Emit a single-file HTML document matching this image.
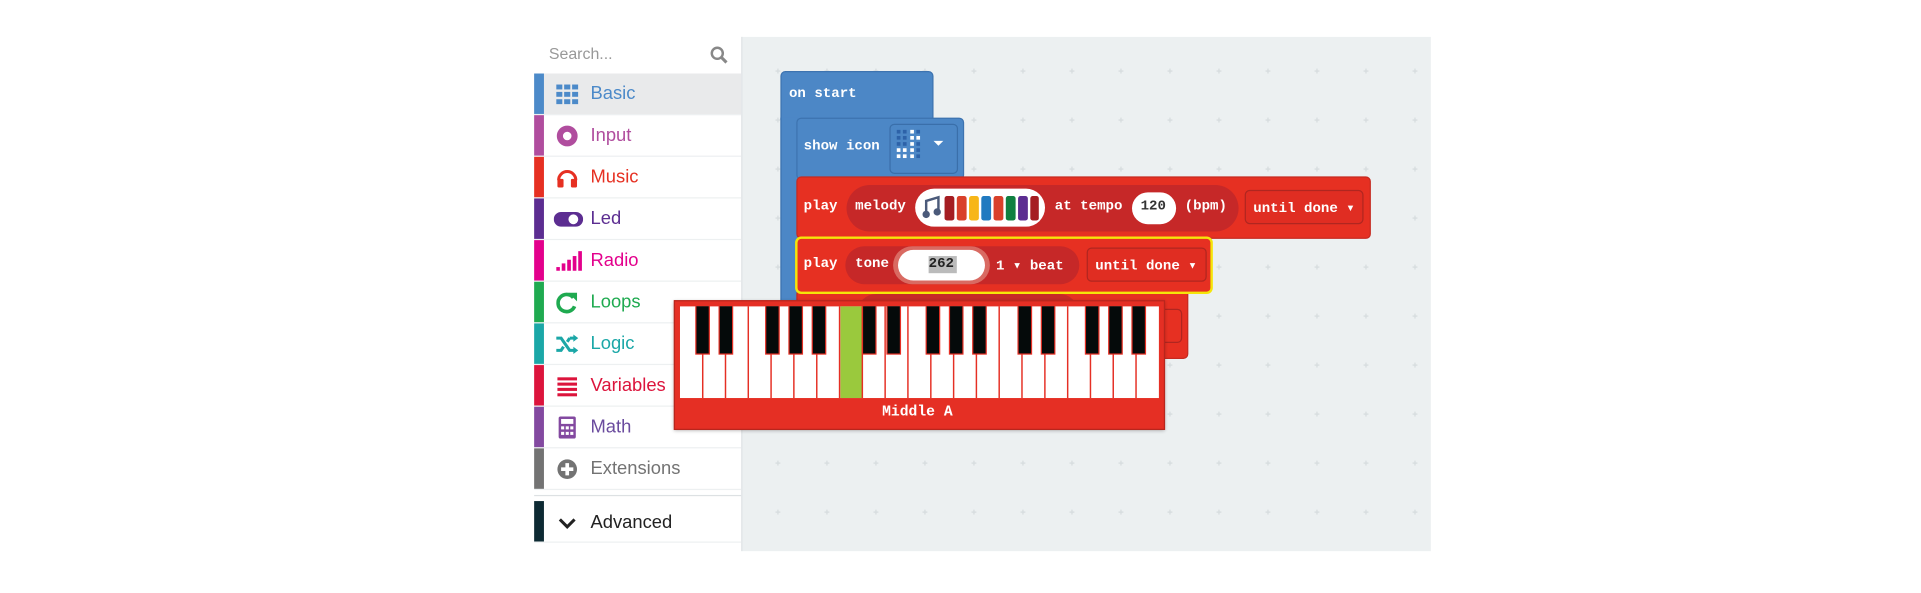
<!DOCTYPE html>
<html><head><meta charset="utf-8"><style>
*{margin:0;padding:0;box-sizing:border-box}
body{width:1921px;height:593px;background:#fff;position:relative;overflow:hidden;font-family:"Liberation Sans",sans-serif}
#w{position:absolute;left:0;top:0;width:1568px;height:484px;transform:scale(1.2251);transform-origin:0 0}
.a{position:absolute}
.row{position:absolute;left:436px;width:169px;height:34px;border-bottom:1px solid #edf0f1}
.row .bar{position:absolute;left:0;top:0;width:8px;height:100%}
.row .lb{position:absolute;left:46px;top:8px;font-size:15px}
.row .ic{position:absolute;left:18px;top:8px;width:18px;height:18px}
.m{font-family:"Liberation Mono",monospace;font-weight:bold;font-size:11.5px;color:#fff;position:absolute;white-space:nowrap}
</style></head><body><div id="w">
<svg class="a" style="left:605px;top:30px" width="563" height="420">
<defs><pattern id="p" width="40" height="40" patternUnits="userSpaceOnUse" x="10" y="8"><path d="M18 20h4M20 18v4" stroke="#d6dcde" stroke-width="1"/></pattern></defs>
<rect width="563" height="420" fill="#ecf0f1"/><rect width="563" height="420" fill="url(#p)"/>
<rect x="0" y="0" width="1" height="420" fill="#dde1e3"/>
</svg>
<div class="a" style="left:448px;top:36px;font-size:13px;color:#999">Search...</div>
<svg class="a" style="left:579px;top:37px" width="16" height="16"><circle cx="6.5" cy="6.5" r="4.5" fill="none" stroke="#888" stroke-width="2"/><path d="M10 10l4 4" stroke="#888" stroke-width="2.5"/></svg>

<div class="row" style="top:60px;background:#e9eaeb"><div class="bar" style="background:#4c8ac9"></div>
<svg class="ic" viewBox="0 0 18 18"><g fill="#4c8ac9"><rect x="0" y="1" width="5" height="4"/><rect x="6.5" y="1" width="5" height="4"/><rect x="13" y="1" width="5" height="4"/><rect x="0" y="7" width="5" height="4"/><rect x="6.5" y="7" width="5" height="4"/><rect x="13" y="7" width="5" height="4"/><rect x="0" y="13" width="5" height="4"/><rect x="6.5" y="13" width="5" height="4"/><rect x="13" y="13" width="5" height="4"/></g></svg>
<div class="lb" style="color:#4c8ac9">Basic</div></div>
<div class="row" style="top:94px"><div class="bar" style="background:#b04d9e"></div>
<svg class="ic" viewBox="0 0 18 18"><circle cx="9" cy="9" r="6" fill="none" stroke="#b04d9e" stroke-width="5"/></svg>
<div class="lb" style="color:#b04d9e">Input</div></div>
<div class="row" style="top:128px"><div class="bar" style="background:#e63022"></div>
<svg class="ic" viewBox="0 0 18 18"><path d="M2 11a7 7 0 0 1 14 0" fill="none" stroke="#e63022" stroke-width="2.5"/><rect x="1" y="10" width="5" height="7" rx="1" fill="#e63022"/><rect x="12" y="10" width="5" height="7" rx="1" fill="#e63022"/></svg>
<div class="lb" style="color:#e63022">Music</div></div>
<div class="row" style="top:162px"><div class="bar" style="background:#5c2d91"></div>
<svg class="ic" viewBox="0 0 24 18" style="width:24px;left:16px"><rect x="0" y="3" width="24" height="12" rx="6" fill="#5c2d91"/><circle cx="16" cy="9" r="4" fill="#fff"/></svg>
<div class="lb" style="color:#5c2d91">Led</div></div>
<div class="row" style="top:196px"><div class="bar" style="background:#e3008c"></div>
<svg class="ic" viewBox="0 0 22 18" style="width:22px"><g fill="#e3008c"><rect x="0" y="14" width="3" height="3"/><rect x="4.5" y="11" width="3" height="6"/><rect x="9" y="8" width="3" height="9"/><rect x="13.5" y="5" width="3" height="12"/><rect x="18" y="1" width="3" height="16"/></g></svg>
<div class="lb" style="color:#e3008c">Radio</div></div>
<div class="row" style="top:230px"><div class="bar" style="background:#1faa50"></div>
<svg class="ic" viewBox="0 0 18 18"><path d="M14 5A7 7 0 1 0 15 12" fill="none" stroke="#1faa50" stroke-width="3"/><path d="M10 1h7v7z" fill="#1faa50"/></svg>
<div class="lb" style="color:#1faa50">Loops</div></div>
<div class="row" style="top:264px"><div class="bar" style="background:#1ba7a7"></div>
<svg class="ic" viewBox="0 0 18 18"><path d="M0 4h4l7 10h4M0 14h4l2-3M11 4h4M9 7l2-3" fill="none" stroke="#1ba7a7" stroke-width="2.5"/><path d="M14 1l4 3-4 3zM14 11l4 3-4 3z" fill="#1ba7a7"/></svg>
<div class="lb" style="color:#1ba7a7">Logic</div></div>
<div class="row" style="top:298px"><div class="bar" style="background:#dc143c"></div>
<svg class="ic" viewBox="0 0 18 18"><g fill="#dc143c"><rect x="1" y="2" width="16" height="2.5"/><rect x="1" y="6.3" width="16" height="2.5"/><rect x="1" y="10.6" width="16" height="2.5"/><rect x="1" y="15" width="16" height="2.5"/></g></svg>
<div class="lb" style="color:#dc143c">Variables</div></div>
<div class="row" style="top:332px"><div class="bar" style="background:#8349a0"></div>
<svg class="ic" viewBox="0 0 18 18"><rect x="2" y="0" width="14" height="18" rx="1.5" fill="#8349a0"/><rect x="4" y="2" width="10" height="4" fill="#fff"/><g fill="#fff"><rect x="4" y="8" width="2.5" height="2.5"/><rect x="7.8" y="8" width="2.5" height="2.5"/><rect x="11.5" y="8" width="2.5" height="2.5"/><rect x="4" y="12.5" width="2.5" height="2.5"/><rect x="7.8" y="12.5" width="2.5" height="2.5"/><rect x="11.5" y="12.5" width="2.5" height="2.5"/></g></svg>
<div class="lb" style="color:#6a4b9e">Math</div></div>
<div class="row" style="top:366px"><div class="bar" style="background:#737373"></div>
<svg class="ic" viewBox="0 0 18 18"><circle cx="9" cy="9" r="8" fill="#737373"/><path d="M9 4v10M4 9h10" stroke="#fff" stroke-width="3"/></svg>
<div class="lb" style="color:#737373">Extensions</div></div>
<div class="a" style="left:436px;top:404px;width:169px;height:1px;background:#dde1e3"></div>
<div class="row" style="top:409px;height:34px"><div class="bar" style="background:#0d2a33"></div>
<svg class="ic" viewBox="0 0 18 18" style="top:9px"><path d="M3 6l6 6 6-6" fill="none" stroke="#222" stroke-width="2.5"/></svg>
<div class="lb" style="color:#222;top:9px">Advanced</div></div>

<div class="a" style="left:637px;top:58px;width:125px;height:40px;background:#4c87c6;border:1px solid #3d73b0;border-radius:4px 4px 0 0"></div>
<div class="m" style="left:644px;top:70px">on start</div>
<div class="a" style="left:637px;top:96px;width:14px;height:160px;background:#4c87c6;border-left:1px solid #3d73b0"></div>
<div class="a" style="left:650px;top:96px;width:137px;height:51px;background:#4c87c6;border:1px solid #3d73b0;border-radius:4px"></div>
<div class="m" style="left:656px;top:113px">show icon</div>
<div class="a" style="left:726px;top:101px;width:56px;height:41px;border:1px solid #3a6faa;border-radius:4px"></div>
<svg class="a" style="left:730px;top:105px" width="48" height="32"><g fill="#fff">
<rect x="2" y="1" width="3" height="3" fill="#2d62a8"/><rect x="7" y="1" width="3" height="3" fill="#2d62a8"/><rect x="13" y="1" width="3" height="3"/><rect x="18" y="1" width="3" height="3" fill="#2d62a8"/><rect x="13" y="6" width="3" height="3"/><rect x="18" y="6" width="3" height="3"/><rect x="2" y="6" width="3" height="3" fill="#2d62a8"/><rect x="7" y="6" width="3" height="3" fill="#2d62a8"/><rect x="13" y="11" width="3" height="3"/><rect x="2" y="11" width="3" height="3" fill="#2d62a8"/><rect x="7" y="11" width="3" height="3" fill="#2d62a8"/><rect x="18" y="11" width="3" height="3" fill="#2d62a8"/><rect x="2" y="16" width="3" height="3"/><rect x="7" y="16" width="3" height="3"/><rect x="13" y="16" width="3" height="3"/><rect x="18" y="16" width="3" height="3" fill="#2d62a8"/><rect x="2" y="21" width="3" height="3"/><rect x="7" y="21" width="3" height="3"/><rect x="13" y="21" width="3" height="3"/><rect x="18" y="21" width="3" height="3" fill="#2d62a8"/>
<path d="M32 10h8l-4 4z"/></g></svg>

<div class="a" style="left:650px;top:144px;width:469px;height:51px;background:#e63022;border:1px solid #c62a20;border-radius:4px"></div>
<div class="a" style="left:691px;top:151px;width:320px;height:38px;background:#c62828;border-radius:19px"></div>
<div class="m" style="left:656px;top:162px">play</div>
<div class="m" style="left:698px;top:162px">melody</div>
<div class="a" style="left:747px;top:154px;width:106px;height:31px;background:#fff;border-radius:16px"></div>
<svg class="a" style="left:752px;top:159px" width="96" height="22"><path d="M4 16V5l10-3v11" fill="none" stroke="#4b5a7a" stroke-width="2"/><circle cx="4" cy="16" r="3" fill="#4b5a7a"/><circle cx="13" cy="14" r="3" fill="#4b5a7a"/>
<g><rect x="19" y="1" width="8" height="20" rx="2" fill="#a51d22"/><rect x="29" y="1" width="8" height="20" rx="2" fill="#d9402a"/><rect x="39" y="1" width="8" height="20" rx="2" fill="#f7b618"/><rect x="49" y="1" width="8" height="20" rx="2" fill="#217ac0"/><rect x="59" y="1" width="8" height="20" rx="2" fill="#d9402a"/><rect x="69" y="1" width="8" height="20" rx="2" fill="#108040"/><rect x="79" y="1" width="8" height="20" rx="2" fill="#5c2d91"/><rect x="89" y="1" width="7" height="20" rx="2" fill="#a51d22"/></g></svg>
<div class="m" style="left:861px;top:162px">at tempo</div>
<div class="a" style="left:924px;top:157px;width:36px;height:26px;background:#fff;border-radius:13px"></div>
<div class="m" style="left:931px;top:162px;color:#333">120</div>
<div class="m" style="left:967px;top:162px">(bpm)</div>
<div class="a" style="left:1016px;top:155px;width:97px;height:28px;border:1px solid #b02620;border-radius:4px;background:#e02d22"></div>
<div class="m" style="left:1023px;top:162px">until done &#9662;</div>

<div class="a" style="left:650px;top:236px;width:320px;height:57px;background:#e63022;border:1px solid #c62a20;border-radius:4px"></div>
<div class="a" style="left:700px;top:240px;width:180px;height:30px;background:#c62828;border-radius:15px"></div>
<div class="a" style="left:940px;top:252px;width:25px;height:28px;border:1px solid #b02620;border-radius:4px"></div>

<div class="a" style="left:649px;top:193px;width:341px;height:47px;background:#e63022;border:2.5px solid #f5e50a;border-radius:5px"></div>
<div class="a" style="left:690px;top:201px;width:191px;height:31px;background:#c62828;border-radius:16px"></div>
<div class="m" style="left:656px;top:209px">play</div>
<div class="m" style="left:698px;top:209px">tone</div>
<div class="a" style="left:729px;top:201px;width:79px;height:31px;border-radius:16px;background:#d96a62"></div>
<div class="a" style="left:733px;top:204px;width:71px;height:25px;background:#fff;border-radius:13px"></div>
<div class="a" style="left:758px;top:209px;width:23px;height:14px;background:#bbb"></div>
<div class="m" style="left:758px;top:209px;color:#222">262</div>
<div class="m" style="left:813px;top:209px">1 &#9662; beat</div>
<div class="a" style="left:887px;top:202px;width:98px;height:28px;border:1px solid #b02620;border-radius:4px;background:#e02d22"></div>
<div class="m" style="left:894px;top:209px">until done &#9662;</div>

<div class="a" style="left:550px;top:245px;width:401px;height:106px;background:#e52f24;border:1px solid #b8261d;box-shadow:0 1px 3px rgba(0,0,0,.3)"></div>
<svg class="a" style="left:555px;top:250px" width="391" height="75">
<rect width="391" height="75" fill="#fff"/>
<rect x="131" y="0" width="18" height="75" fill="#9ac93d"/>
<g stroke="#e52f24" stroke-width="1.2">
<path d="M18.6 0v75M37.2 0v75M55.8 0v75M74.4 0v75M93 0v75M111.7 0v75M130.3 0v75M148.9 0v75M167.5 0v75M186.1 0v75M204.8 0v75M223.4 0v75M242 0v75M260.6 0v75M279.2 0v75M297.9 0v75M316.5 0v75M335.1 0v75M353.7 0v75M372.3 0v75"/>
</g>
<g fill="#050a0a" stroke="#e52f24" stroke-width="1">
<rect x="13" y="-1" width="11" height="40"/><rect x="32" y="-1" width="11" height="40"/>
<rect x="70" y="-1" width="11" height="40"/><rect x="89" y="-1" width="11" height="40"/><rect x="108" y="-1" width="11" height="40"/>
<rect x="149" y="-1" width="11" height="40"/><rect x="169" y="-1" width="11" height="40"/>
<rect x="201" y="-1" width="11" height="40"/><rect x="220" y="-1" width="11" height="40"/><rect x="239" y="-1" width="11" height="40"/>
<rect x="276" y="-1" width="11" height="40"/><rect x="295" y="-1" width="11" height="40"/>
<rect x="331" y="-1" width="11" height="40"/><rect x="350" y="-1" width="11" height="40"/><rect x="369" y="-1" width="11" height="40"/>
</g></svg>
<div class="m" style="left:720px;top:329px;font-size:12px">Middle A</div>
</div></body></html>
